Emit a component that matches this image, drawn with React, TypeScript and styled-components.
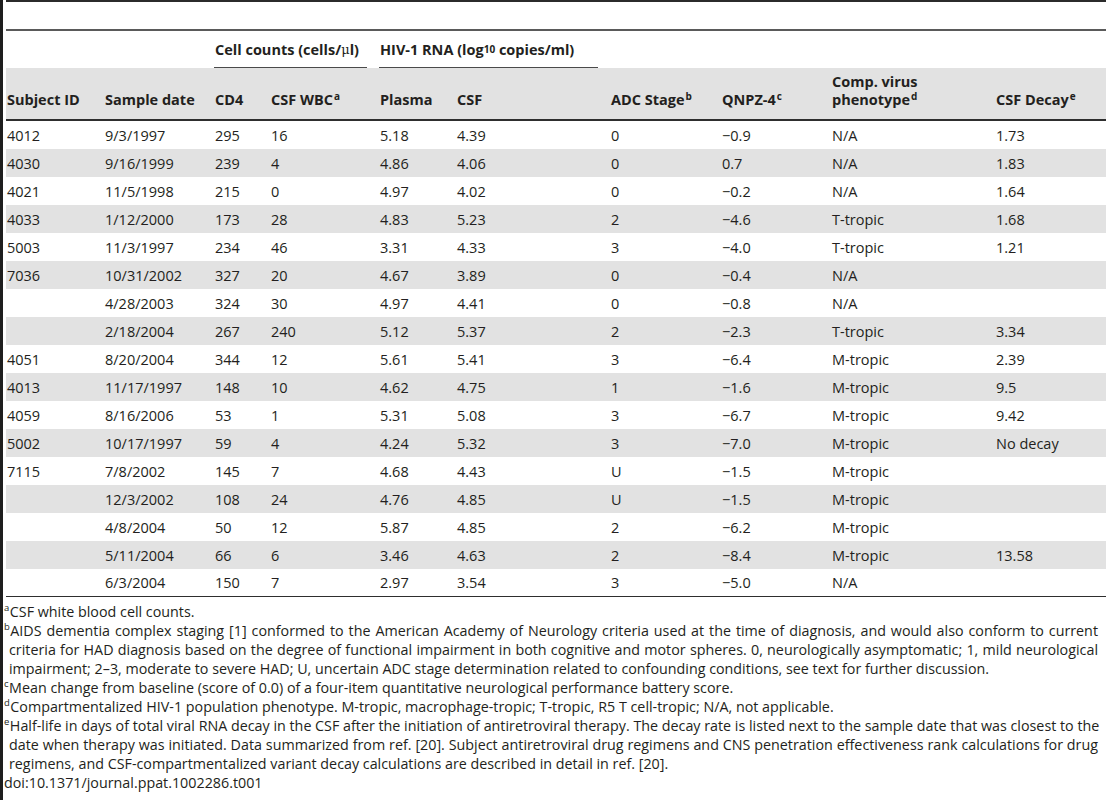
import styled, { createGlobalStyle } from "styled-components";

const GlobalStyle = createGlobalStyle`
  html, body {
    margin: 0;
    padding: 0;
    background: #ffffff;
  }
  body {
    font-family: "Open Sans", "Liberation Sans", sans-serif;
    color: #231f20;
  }
`;

const Page = styled.div`
  width: 1103px;
  height: 800px;
  overflow: hidden;
  border-left: 3px solid #1e1e1e;
`;

const TopRule = styled.div`
  margin-left: 3px;
  height: 27px;
  border-top: 2px solid #2b2b2b;
  border-bottom: 2px solid #5a5a5a;
`;

const Table = styled.table`
  margin-left: 3px;
  width: 1100px;
  table-layout: fixed;
  border-collapse: separate;
  border-spacing: 0;
  font-size: 14.5px;
`;

const GroupCell = styled.th`
  height: 37px;
  padding: 0;
  text-align: left;
  vertical-align: top;
  font-weight: 700;
`;

const GroupLabel = styled.div`
  height: 36px;
  margin-right: 12px;
  padding-left: 1px;
  display: flex;
  align-items: center;
  border-bottom: 1px solid #4a4a4a;
  white-space: nowrap;
`;

const HeadCell = styled.th`
  height: 41px;
  padding: 0 0 10px 1px;
  background: #e2e2e2;
  border-bottom: 2px solid #2e2e2e;
  text-align: left;
  vertical-align: bottom;
  font-weight: 700;
  line-height: 18px;
  white-space: nowrap;
`;

const Row = styled.tr<{ $striped: boolean }>`
  background: ${(p) => (p.$striped ? "#e2e2e2" : "transparent")};
`;

const Cell = styled.td<{ $last: boolean }>`
  height: ${(p) => (p.$last ? "27px" : "28px")};
  padding: 0 0 0 1px;
  border-bottom: ${(p) => (p.$last ? "1px solid #2e2e2e" : "none")};
  white-space: nowrap;
  vertical-align: middle;
`;

const Sup = styled.sup`
  font-size: 10px;
  font-weight: 700;
  line-height: 0;
  vertical-align: 5px;
  margin-left: 1px;
`;

const Sub = styled.sub`
  font-size: 10px;
  line-height: 0;
  vertical-align: -4px;
`;

const Mu = styled.span`
  font-family: "DejaVu Serif", serif;
  font-weight: 400;
  font-size: 13px;
`;

const Notes = styled.div`
  margin-top: 5px;
  padding-left: 1px;
  font-size: 14.3px;
  line-height: 19px;
`;

const NoteLine = styled.div<{ $hang: boolean; $full: boolean }>`
  white-space: nowrap;
  padding-left: ${(p) => (p.$hang ? "5px" : "0")};
  width: ${(p) => (p.$full ? (p.$hang ? "1089px" : "1094px") : "auto")};
  text-align: ${(p) => (p.$full ? "justify" : "left")};
  text-align-last: ${(p) => (p.$full ? "justify" : "auto")};
`;

const NoteMark = styled.sup`
  font-size: 9.5px;
  line-height: 0;
  vertical-align: 6px;
  margin-right: 0.5px;
`;

const widths = [98, 110, 56, 109, 77, 154, 111, 110, 164, 111];

const M = "\u2212";

const rows: string[][] = [
  ["4012", "9/3/1997", "295", "16", "5.18", "4.39", "0", M + "0.9", "N/A", "1.73"],
  ["4030", "9/16/1999", "239", "4", "4.86", "4.06", "0", "0.7", "N/A", "1.83"],
  ["4021", "11/5/1998", "215", "0", "4.97", "4.02", "0", M + "0.2", "N/A", "1.64"],
  ["4033", "1/12/2000", "173", "28", "4.83", "5.23", "2", M + "4.6", "T-tropic", "1.68"],
  ["5003", "11/3/1997", "234", "46", "3.31", "4.33", "3", M + "4.0", "T-tropic", "1.21"],
  ["7036", "10/31/2002", "327", "20", "4.67", "3.89", "0", M + "0.4", "N/A", ""],
  ["", "4/28/2003", "324", "30", "4.97", "4.41", "0", M + "0.8", "N/A", ""],
  ["", "2/18/2004", "267", "240", "5.12", "5.37", "2", M + "2.3", "T-tropic", "3.34"],
  ["4051", "8/20/2004", "344", "12", "5.61", "5.41", "3", M + "6.4", "M-tropic", "2.39"],
  ["4013", "11/17/1997", "148", "10", "4.62", "4.75", "1", M + "1.6", "M-tropic", "9.5"],
  ["4059", "8/16/2006", "53", "1", "5.31", "5.08", "3", M + "6.7", "M-tropic", "9.42"],
  ["5002", "10/17/1997", "59", "4", "4.24", "5.32", "3", M + "7.0", "M-tropic", "No decay"],
  ["7115", "7/8/2002", "145", "7", "4.68", "4.43", "U", M + "1.5", "M-tropic", ""],
  ["", "12/3/2002", "108", "24", "4.76", "4.85", "U", M + "1.5", "M-tropic", ""],
  ["", "4/8/2004", "50", "12", "5.87", "4.85", "2", M + "6.2", "M-tropic", ""],
  ["", "5/11/2004", "66", "6", "3.46", "4.63", "2", M + "8.4", "M-tropic", "13.58"],
  ["", "6/3/2004", "150", "7", "2.97", "3.54", "3", M + "5.0", "N/A", ""],
];

const notes: { mark: string; lines: string[] }[] = [
  { mark: "a", lines: ["CSF white blood cell counts."] },
  {
    mark: "b",
    lines: [
      "AIDS dementia complex staging [1] conformed to the American Academy of Neurology criteria used at the time of diagnosis, and would also conform to current",
      "criteria for HAD diagnosis based on the degree of functional impairment in both cognitive and motor spheres. 0, neurologically asymptomatic; 1, mild neurological",
      "impairment; 2\u20133, moderate to severe HAD; U, uncertain ADC stage determination related to confounding conditions, see text for further discussion.",
    ],
  },
  {
    mark: "c",
    lines: [
      "Mean change from baseline (score of 0.0) of a four-item quantitative neurological performance battery score.",
    ],
  },
  {
    mark: "d",
    lines: [
      "Compartmentalized HIV-1 population phenotype. M-tropic, macrophage-tropic; T-tropic, R5 T cell-tropic; N/A, not applicable.",
    ],
  },
  {
    mark: "e",
    lines: [
      "Half-life in days of total viral RNA decay in the CSF after the initiation of antiretroviral therapy. The decay rate is listed next to the sample date that was closest to the",
      "date when therapy was initiated. Data summarized from ref. [20]. Subject antiretroviral drug regimens and CNS penetration effectiveness rank calculations for drug",
      "regimens, and CSF-compartmentalized variant decay calculations are described in detail in ref. [20].",
    ],
  },
];

export default function App() {
  return (
    <Page>
      <GlobalStyle />
      <TopRule />
      <Table>
        <colgroup>
          {widths.map((w, i) => (
            <col key={i} style={{ width: w }} />
          ))}
        </colgroup>
        <thead>
          <tr>
            <GroupCell />
            <GroupCell />
            <GroupCell colSpan={2}>
              <GroupLabel>
                Cell counts (cells/<Mu>μ</Mu>l)
              </GroupLabel>
            </GroupCell>
            <GroupCell colSpan={2}>
              <GroupLabel>
                HIV-1 RNA (log<Sub>10</Sub>&nbsp;copies/ml)
              </GroupLabel>
            </GroupCell>
            <GroupCell />
            <GroupCell />
            <GroupCell />
            <GroupCell />
          </tr>
          <tr>
            <HeadCell>Subject ID</HeadCell>
            <HeadCell>Sample date</HeadCell>
            <HeadCell>CD4</HeadCell>
            <HeadCell>
              CSF WBC<Sup>a</Sup>
            </HeadCell>
            <HeadCell>Plasma</HeadCell>
            <HeadCell>CSF</HeadCell>
            <HeadCell>
              ADC Stage<Sup>b</Sup>
            </HeadCell>
            <HeadCell>
              QNPZ-4<Sup>c</Sup>
            </HeadCell>
            <HeadCell>
              Comp. virus
              <br />
              phenotype<Sup>d</Sup>
            </HeadCell>
            <HeadCell>
              CSF Decay<Sup>e</Sup>
            </HeadCell>
          </tr>
        </thead>
        <tbody>
          {rows.map((r, i) => (
            <Row key={i} $striped={i % 2 === 1}>
              {r.map((v, j) => (
                <Cell key={j} $last={i === rows.length - 1}>
                  {v}
                </Cell>
              ))}
            </Row>
          ))}
        </tbody>
      </Table>
      <Notes>
        {notes.map((n) =>
          n.lines.map((l, k) => (
            <NoteLine
              key={n.mark + k}
              $hang={k > 0}
              $full={k < n.lines.length - 1}
            >
              {k === 0 && <NoteMark>{n.mark}</NoteMark>}
              {l}
            </NoteLine>
          ))
        )}
        <NoteLine $hang={false} $full={false}>
          doi:10.1371/journal.ppat.1002286.t001
        </NoteLine>
      </Notes>
    </Page>
  );
}
